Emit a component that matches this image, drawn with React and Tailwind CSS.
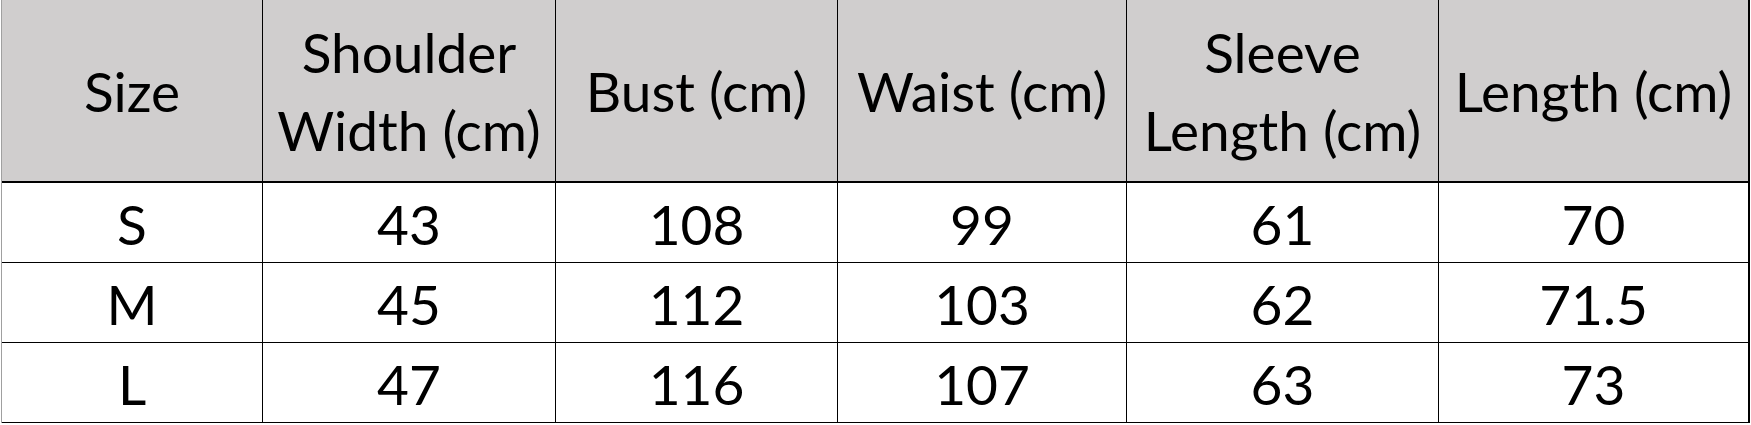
import React from "react";

const cols = [
  "w-[261px]",
  "w-[293px]",
  "w-[282px]",
  "w-[289px]",
  "w-[312px]",
  "w-[311px]",
];

const header = [
  ["Size"],
  ["Shoulder", "Width (cm)"],
  ["Bust (cm)"],
  ["Waist (cm)"],
  ["Sleeve", "Length (cm)"],
  ["Length (cm)"],
];

const rows = [
  ["S", "43", "108", "99", "61", "70"],
  ["M", "45", "112", "103", "62", "71.5"],
  ["L", "47", "116", "107", "63", "73"],
];

export default function App() {
  return (
    <div
      className="w-[1751px] h-[425px] bg-white text-black"
      style={{ fontFamily: "Lato, 'Open Sans', sans-serif" }}
    >
      <div className="ml-px border-l border-[#a0a0a0] flex flex-col w-fit">
        <div className="flex h-[183px] bg-[#d0cece] border-b-2 border-black">
          {header.map((lines, i) => (
            <div
              key={i}
              className={`${cols[i]} flex flex-col items-center justify-center border-r ${
                i === 5 ? "border-r-2" : ""
              } border-black text-[55px] leading-[78px] whitespace-nowrap`}
            >
              {lines.map((l, j) => (
                <span key={j}>{l}</span>
              ))}
            </div>
          ))}
        </div>
        {rows.map((r, ri) => (
          <div key={ri} className="flex h-[80px] border-b border-black bg-white">
            {r.map((v, i) => (
              <div
                key={i}
                className={`${cols[i]} flex items-center justify-center border-r ${
                  i === 5 ? "border-r-2" : ""
                } border-black text-[55px] leading-none pt-[4px]`}
              >
                {v}
              </div>
            ))}
          </div>
        ))}
      </div>
    </div>
  );
}
